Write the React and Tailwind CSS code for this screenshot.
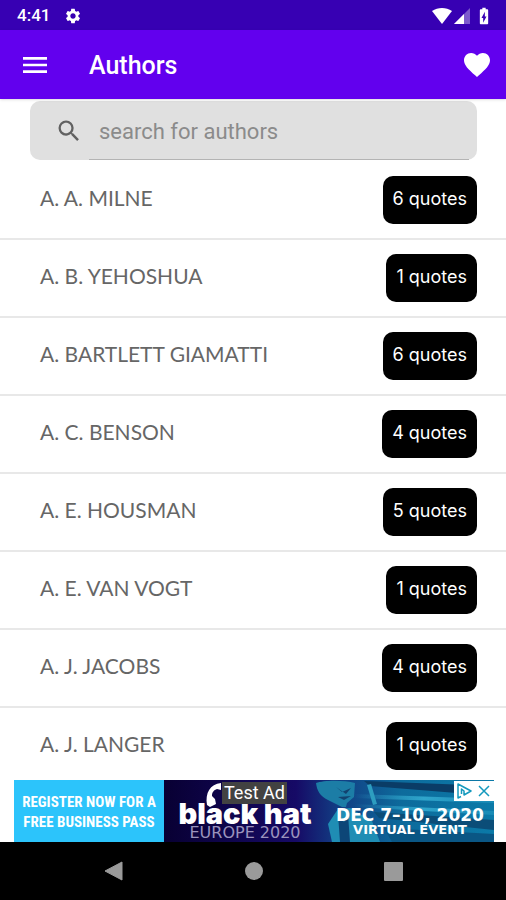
import { useState } from 'react';
import {
  MdMenu,
  MdSearch,
  MdSettings,
  MdBatteryChargingFull
} from 'react-icons/md';

const AUTHORS = [
  { name: 'A. A. MILNE', quotes: 6 },
  { name: 'A. B. YEHOSHUA', quotes: 1 },
  { name: 'A. BARTLETT GIAMATTI', quotes: 6 },
  { name: 'A. C. BENSON', quotes: 4 },
  { name: 'A. E. HOUSMAN', quotes: 5 },
  { name: 'A. E. VAN VOGT', quotes: 1 },
  { name: 'A. J. JACOBS', quotes: 4 },
  { name: 'A. J. LANGER', quotes: 1 }
];

function StatusBar() {
  return (
    <div className="flex h-[30px] shrink-0 items-center bg-[#3700b3] pt-px pr-3 pl-[17px] text-white">
      <span className="text-[17px] leading-none font-medium">4:41</span>
      <MdSettings className="ml-[14px] size-[18px]" />
      <div className="ml-auto flex items-center">
        <svg className="h-4 w-5" viewBox="0 0 20 16" fill="currentColor">
          <path d="M0 3C6-1 14-1 20 3L10 16Z" />
        </svg>
        <svg className="ml-[2px] size-4" viewBox="0 0 16 16" fill="currentColor">
          <path d="M16 0V16H0Z" opacity=".35" />
          <path d="M10 6V16H0Z" />
        </svg>
        <MdBatteryChargingFull className="ml-1 size-5" />
      </div>
    </div>
  );
}

function AppBar() {
  return (
    <header className="z-10 flex h-[69px] shrink-0 items-center bg-[#6200ee] pr-4 pl-[19px] text-white shadow-sm">
      <button aria-label="Open menu">
        <MdMenu className="size-8" />
      </button>
      <h1 className="ml-[38px] pt-[2px] text-[25px] leading-8 font-medium">Authors</h1>
      <button aria-label="Favourites" className="ml-auto">
        <svg className="h-6 w-[26px]" viewBox="0 0 26 24" fill="currentColor">
          <path d="M13 24 11.1 22.3C4.4 16.2 0 12.2 0 7.2 0 3.2 3.1 0 7.1 0 9.4 0 11.6 1.1 13 2.8 14.4 1.1 16.6 0 18.9 0 22.9 0 26 3.2 26 7.2 26 12.2 21.6 16.2 14.9 22.3Z" />
        </svg>
      </button>
    </header>
  );
}

function AdBanner() {
  return (
    <div className="relative mr-3 ml-[14px] h-[62px] shrink-0">
      <a href="#ad" className="flex h-full overflow-hidden bg-[#2cc4fb] text-white">
        <span className="flex w-[150px] shrink-0 flex-col items-center justify-center pt-[2px] font-['Roboto_Condensed','Liberation_Sans_Narrow',sans-serif] text-[15px] leading-5 font-bold whitespace-nowrap">
          <span>REGISTER NOW FOR A</span>
          <span>FREE BUSINESS PASS</span>
        </span>
        <span className="relative flex flex-1 bg-[#0d0545]">
          <svg className="absolute inset-0 h-full w-full" viewBox="0 0 330 62" preserveAspectRatio="none">
            <defs>
              <linearGradient id="sky">
                <stop offset="0" stopColor="#080033" />
                <stop offset=".4" stopColor="#160a66" />
                <stop offset=".52" stopColor="#123b82" />
                <stop offset=".72" stopColor="#0d6b9c" />
                <stop offset="1" stopColor="#0b7aa8" />
              </linearGradient>
              <linearGradient id="beam">
                <stop offset="0" stopColor="#38b2d6" stopOpacity="0" />
                <stop offset=".5" stopColor="#38b2d6" stopOpacity=".8" />
                <stop offset="1" stopColor="#38b2d6" stopOpacity=".3" />
              </linearGradient>
            </defs>
            <path d="M0 0H330V62H0Z" fill="url(#sky)" />
            <path d="M200 1 330 6V16L206 6Z" fill="#0a3c66" />
            <path d="M190 14 330 19V23L190 18Z" fill="url(#beam)" />
            <path d="M190 24 330 31V35L190 27Z" fill="url(#beam)" />
            <path d="M210 32 330 40V50L215 38Z" fill="#0b4d78" />
            <path d="M220 48 330 54V62H228Z" fill="#0a5684" />
            <path d="M152 3C160 0 180 0 191 3L190 17 183 23 182 27H178L164 20C156 16 153 11 152 3Z" fill="#1c7da6" />
            <path d="M172 7 178 12 187 8 182 14ZM174 17 187 16 180 20Z" fill="#12426f" />
            <path d="M168 62 164 44 174 29 186 28 208 41 216 62Z" fill="#1f8db4" />
            <path d="M174 34 180 42 184 34 186 62H176Z" fill="#0d4677" />
            <path d="M203 5 207 4 213 24 209 25Z" fill="#2d9dc0" />
            <path d="M57 3C46 4 41 13 43 25L46 27 52 24 51 19 48 16C48 12 50 10 53 9L57 10Z" fill="#fff" />
          </svg>
          <span className="relative flex w-[162px] flex-col items-center justify-end whitespace-nowrap">
            <span className="font-[Inter,sans-serif] text-[29px] leading-5 font-black">black hat</span>
            <span className="font-['DejaVu_Sans',sans-serif] text-[16px] leading-[18px] text-[#9b93bd]">EUROPE 2020</span>
          </span>
          <span className="relative flex flex-1 flex-col items-center justify-end pb-[6px] font-['DejaVu_Sans',sans-serif] font-bold whitespace-nowrap">
            <span className="text-[17px] leading-4">DEC 7–10, 2020</span>
            <span className="text-[13px] leading-[13px]">VIRTUAL EVENT</span>
          </span>
        </span>
      </a>
      <span className="absolute top-[2px] left-[208px] bg-[#424242] px-[2px] text-[18px] leading-[22px] text-white">Test Ad</span>
      <div className="absolute top-px right-0 flex h-5 items-center gap-1 bg-white px-[2px] text-[#1499bd]">
        <button aria-label="Ad choices">
          <svg className="h-4 w-4" viewBox="0 0 16 16" fill="none" stroke="currentColor" strokeWidth="1.5" strokeLinejoin="round">
            <path d="M5 13.5 2 15V1L15 8 8 12V8L5.5 6V11" />
          </svg>
        </button>
        <button aria-label="Close ad">
          <svg className="h-4 w-4" viewBox="0 0 16 16" stroke="currentColor" strokeWidth="1.5">
            <path d="M3 3 13 13M13 3 3 13" />
          </svg>
        </button>
      </div>
    </div>
  );
}

function NavBar() {
  return (
    <nav className="flex h-[58px] shrink-0 items-center justify-center gap-[121px] bg-black text-[#9a9a9a]">
      <button aria-label="Back">
        <svg className="size-5" viewBox="0 0 20 20" fill="currentColor">
          <path d="M18 1V19L1 10Z" stroke="currentColor" strokeLinejoin="round" />
        </svg>
      </button>
      <button aria-label="Home" className="size-[18px] rounded-full bg-[#9a9a9a]" />
      <button aria-label="Recent apps" className="size-[19px] rounded-[1px] bg-[#9a9a9a]" />
    </nav>
  );
}

export default function App() {
  const [query, setQuery] = useState('');

  const filtered = AUTHORS.filter(a =>
    a.name.toLowerCase().includes(query.trim().toLowerCase())
  );

  return (
    <div className="flex h-screen flex-col overflow-hidden bg-white font-[Roboto,sans-serif]">
      <StatusBar />
      <AppBar />

      <label className="mt-[2px] mr-[29px] ml-[30px] flex h-[59px] shrink-0 items-center rounded-[10px] bg-[#e0e0e0] pr-2 pl-[25px]">
        <MdSearch className="size-7 shrink-0 text-[#616161]" />
        <input
          type="text"
          aria-label="Search for authors"
          placeholder="search for authors"
          value={query}
          onChange={e => setQuery(e.target.value)}
          className="ml-[6px] h-full min-w-0 flex-1 border-b border-[#b4b4b4] px-[10px] pt-[2px] text-[22px] outline-none placeholder:text-[#8b8b8b]"
        />
      </label>

      <ul className="min-h-0 flex-1 overflow-hidden pt-[2px]">
        {filtered.map(a => (
          <li
            key={a.name}
            className="flex h-[78px] items-center justify-between border-b-2 border-[#e8e8e8] pr-[29px] pl-10"
          >
            <span className="pb-1 font-[Lato,sans-serif] text-[21px] leading-7 text-[#666]">{a.name}</span>
            <span className="rounded-[10px] bg-black px-[10px] pt-[11px] pb-[13px] font-[Inter,sans-serif] text-[18px] leading-6 text-white">
              {a.quotes} quotes
            </span>
          </li>
        ))}
      </ul>

      <AdBanner />
      <NavBar />
    </div>
  );
}
